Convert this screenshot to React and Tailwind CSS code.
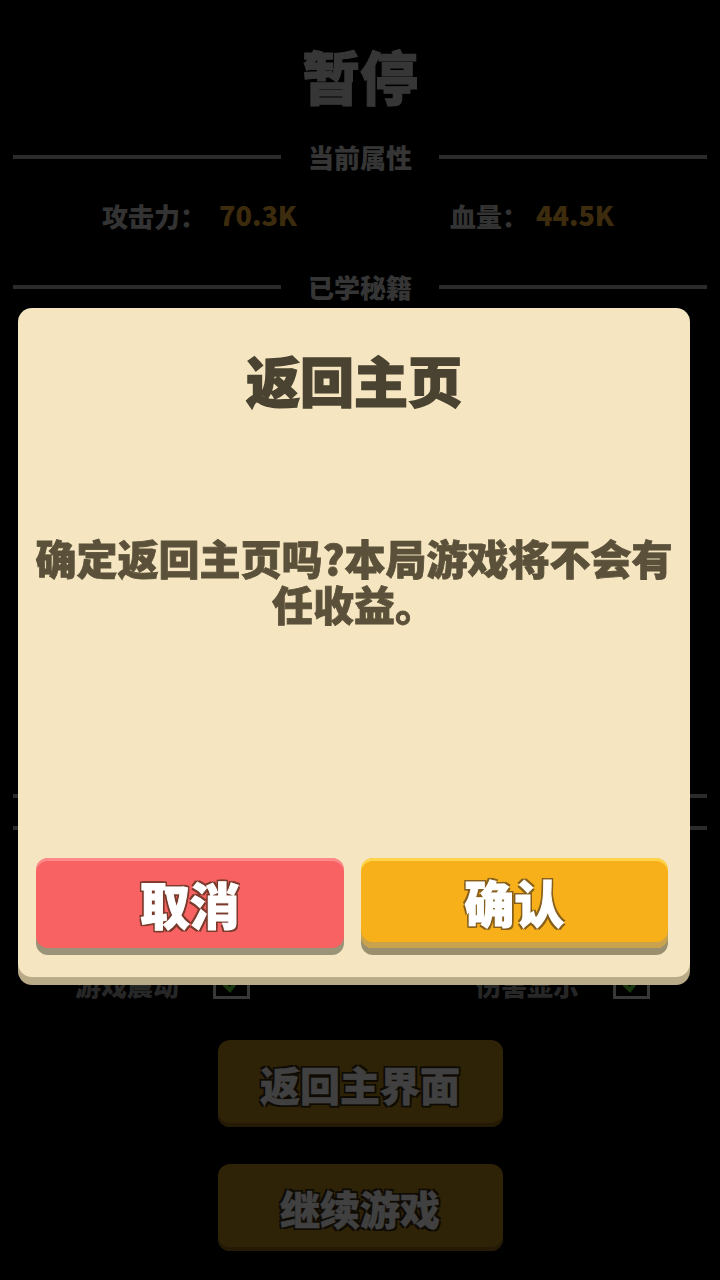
import React, { useState } from 'react';

const font = "font-['Noto_Sans_CJK_SC','Noto_Sans',sans-serif]";

const SectionTitle = ({ children }) => (
  <div className="flex items-center h-[40px] px-[13px]">
    <div className="flex-1 h-[4px] bg-[#ababab]" />
    <span className="px-[27px] text-[26px] font-black text-[#d4d4d4] leading-none">{children}</span>
    <div className="flex-1 h-[4px] bg-[#ababab]" />
  </div>
);

const Toggle = ({ label, checked }) => (
  <div className="flex items-center gap-[34px]">
    <span className="text-[26px] font-black text-[#9a9a9a]">{label}</span>
    <div className="w-[37px] h-[30px] border-[3px] border-[#e0e0e0] flex items-center justify-center">
      {checked && (
        <svg width="22" height="20" viewBox="0 0 22 20">
          <path d="M3 10 L9 16 L19 3" fill="none" stroke="#5fd63a" strokeWidth="4" />
        </svg>
      )}
    </div>
  </div>
);

const MenuButton = ({ children }) => (
  <button className="w-[285px] h-[87px] rounded-[12px] bg-[#b9891f] shadow-[inset_0_-4px_0_#8f6914] flex items-center justify-center text-[40px] font-black text-white [-webkit-text-stroke:0.5px_#ffffff] [text-shadow:-2px_-2px_0_#3a2a10,2px_-2px_0_#3a2a10,-2px_2px_0_#3a2a10,2px_2px_0_#3a2a10]">
    {children}
  </button>
);

const ConfirmDialog = ({ onCancel, onConfirm }) => (
  <div className="fixed inset-0 z-20 flex pt-[308px] pl-[18px]">
    <div className="w-[672px] h-[669px] rounded-[14px] bg-[#f5e6c1] shadow-[0_8px_0_#b9ab87] flex flex-col">
      <h2 className="pt-[40px] text-center text-[54px] leading-[64px] font-black text-[#4a4331] [-webkit-text-stroke:1.5px_#4a4331]">返回主页</h2>
      <p className="mt-[122px] px-[6px] text-center text-[41px] leading-[46px] font-black text-[#5b513a] [-webkit-text-stroke:0.8px_#5b513a]">
        确定返回主页吗?本局游戏将不会有任收益。
      </p>
      <div className="mt-auto mb-[29px] pl-[18px] pr-[22px] flex gap-[17px]">
        <button
          onClick={onCancel}
          className="flex-1 h-[90px] rounded-[12px] bg-[#f86262] shadow-[inset_0_3px_0_#ff8a8a,0_7px_0_#9a9378] flex items-center justify-center text-[50px] font-black text-white [-webkit-text-stroke:1px_#ffffff] [text-shadow:-2px_-2px_0_#7a3b2c,2px_-2px_0_#7a3b2c,-2px_2px_0_#7a3b2c,2px_2px_0_#7a3b2c,0_2px_0_#7a3b2c,0_-2px_0_#7a3b2c]"
        >
          取消
        </button>
        <button
          onClick={onConfirm}
          className="flex-1 h-[90px] pb-[3px] rounded-[12px] bg-[#f8b01a] shadow-[inset_0_3px_0_#fdd44a,inset_0_-6px_0_#c9a24e,0_7px_0_#9a9070] flex items-center justify-center text-[50px] font-black text-white [-webkit-text-stroke:1px_#ffffff] [text-shadow:-2px_-2px_0_#86601c,2px_-2px_0_#86601c,-2px_2px_0_#86601c,2px_2px_0_#86601c,0_2px_0_#86601c,0_-2px_0_#86601c]"
        >
          确认
        </button>
      </div>
    </div>
  </div>
);

export default function App() {
  const [showDialog, setShowDialog] = useState(true);

  return (
    <div className={`relative min-h-screen bg-black ${font}`}>
      {/* pause screen */}
      <div className="flex flex-col">
        <h1 className="mt-[40px] h-[70px] flex items-center justify-center text-[58px] font-black text-[#d8d8d8] [-webkit-text-stroke:1px_#d8d8d8]">暂停</h1>

        <div className="mt-[27px]">
          <SectionTitle>当前属性</SectionTitle>
        </div>
        <div className="mt-[18px] h-[40px] pl-[102px] grid grid-cols-[348px_1fr] items-center font-black">
          <div className="flex items-center gap-[13px]">
            <span className="text-[26px] text-[#cccccc]">攻击力：</span>
            <span className="text-[27px] text-[#f4ad3a]">70.3K</span>
          </div>
          <div className="flex items-center gap-[8px]">
            <span className="text-[26px] text-[#cccccc]">血量：</span>
            <span className="text-[27px] text-[#f4ad3a]">44.5K</span>
          </div>
        </div>

        <div className="mt-[32px]">
          <SectionTitle>已学秘籍</SectionTitle>
        </div>
        <div className="h-[487px]" />

        <div className="h-[4px] mx-[13px] bg-[#ababab]" />
        <div className="mt-[10px]">
          <SectionTitle>游戏设置</SectionTitle>
        </div>

        <div className="mt-[116px] h-[40px] pl-[75px] pr-[70px] flex items-center justify-between">
          <Toggle label="游戏震动" checked />
          <Toggle label="伤害显示" checked />
        </div>

        <div className="mt-[36px] flex flex-col items-center gap-[37px]">
          <MenuButton>返回主界面</MenuButton>
          <MenuButton>继续游戏</MenuButton>
        </div>
      </div>

      {showDialog && (
        <>
          <div className="fixed inset-0 z-10 bg-black/75" />
          <ConfirmDialog onCancel={() => setShowDialog(false)} onConfirm={() => setShowDialog(false)} />
        </>
      )}
    </div>
  );
}
